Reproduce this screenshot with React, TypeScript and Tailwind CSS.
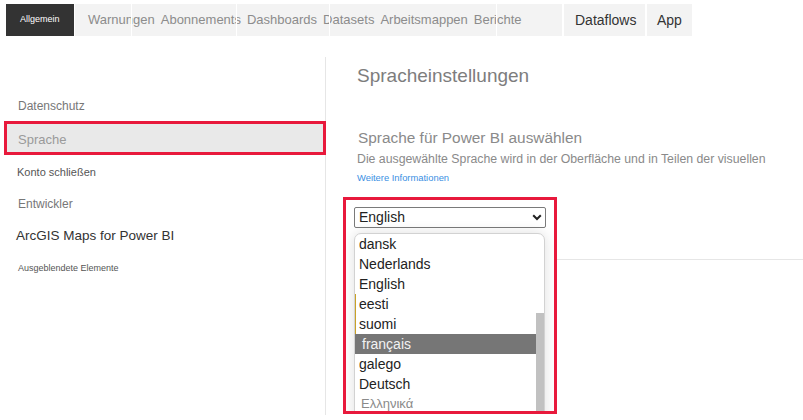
import React from "react";

const F = { fontFamily: '"Liberation Sans", Arial, sans-serif' };

function Chevron() {
  return (
    <svg width="10" height="7" viewBox="0 0 10 7" className="block">
      <path d="M1.2 1.2 L5 5 L8.8 1.2" fill="none" stroke="#222" strokeWidth="2" />
    </svg>
  );
}

const langs = [
  { t: "dansk" },
  { t: "Nederlands" },
  { t: "English" },
  { t: "eesti", mark: true },
  { t: "suomi", mark: true },
  { t: "français", sel: true },
  { t: "galego" },
  { t: "Deutsch" },
  { t: "Ελληνικά", greek: true },
];

export default function App() {
  return (
    <div className="w-[803px] h-[420px] bg-white overflow-hidden" style={F}>
      {/* top tabs */}
      <div className="flex h-[32px] mt-[4px] ml-[6px]">
        <div className="w-[68px] bg-[#333333] text-white text-[9px] flex items-center pl-[14px]">
          Allgemein
        </div>
        <div className="ml-[1px] relative w-[487px] bg-[#f3f3f3] flex items-center pl-[13px] gap-[6px] text-[13px] text-[#8c8c8c] whitespace-nowrap">
          <span>Warnungen</span>
          <span>Abonnements</span>
          <span>Dashboards</span>
          <span>Datasets</span>
          <span>Arbeitsmappen</span>
          <span>Berichte</span>
          <div className="absolute top-0 bottom-0 left-[56px] w-px bg-white" />
          <div className="absolute top-0 bottom-0 left-[161px] w-px bg-white" />
          <div className="absolute top-0 bottom-0 left-[254px] w-px bg-white" />
          <div className="absolute top-0 bottom-0 left-[421px] w-px bg-white" />
        </div>
        <div className="ml-[2px] w-[81px] bg-[#f3f3f3] flex items-center pl-[11px] text-[14px] text-[#333]">
          Dataflows
        </div>
        <div className="ml-[2px] w-[45px] bg-[#f3f3f3] flex items-center pl-[10px] text-[14px] text-[#333]">
          App
        </div>
      </div>

      {/* body */}
      <div className="flex mt-[21px]">
        {/* sidebar */}
        <div className="w-[326px] h-[358px] border-r border-[#e6e6e6] pt-[37px] flex flex-col shrink-0">
          <div className="h-[24px] flex items-center pl-[18px] text-[12px] text-[#777]">Datenschutz</div>
          <div className="mt-[3px] ml-[4px] w-[322px] h-[34px] shrink-0 border-[3px] border-[#e8193c] bg-[#e9e9e9] flex items-center pl-[11px] pt-[3px] text-[13px] text-[#9a9a9a]">
            Sprache
          </div>
          <div className="mt-[5px] h-[24px] flex items-center pl-[17px] text-[11px] text-[#555]">Konto schließen</div>
          <div className="mt-[8px] h-[24px] flex items-center pl-[18px] text-[12px] text-[#777]">Entwickler</div>
          <div className="mt-[8px] h-[24px] flex items-center pl-[16px] text-[13.5px] text-[#333]">ArcGIS Maps for Power BI</div>
          <div className="mt-[9px] h-[24px] flex items-center pl-[18px] text-[9px] text-[#555]">Ausgeblendete Elemente</div>
        </div>

        {/* content */}
        <div className="flex-1 pl-[17px] flex flex-col">
          <div className="pl-[14px] mt-[7px] h-[24px] leading-[24px] text-[19px] text-[#7d7d7d] whitespace-nowrap">
            Spracheinstellungen
          </div>
          <div className="pl-[15px] mt-[40px] h-[20px] leading-[20px] text-[15.4px] text-[#8a8a8a] whitespace-nowrap">
            Sprache für Power BI auswählen
          </div>
          <div className="pl-[14px] mt-[3px] h-[16px] leading-[16px] text-[12.3px] text-[#8a8a8a] whitespace-nowrap">
            Die ausgewählte Sprache wird in der Oberfläche und in Teilen der visuellen
          </div>
          <div className="pl-[14px] mt-[5px] h-[12px] leading-[12px] text-[9.4px] text-[#3a8fe3] whitespace-nowrap">
            Weitere Informationen
          </div>

          <div className="mt-[13px] flex">
            <div className="w-[214px] h-[217px] shrink-0 border-[3px] border-[#e8193c] overflow-hidden">
              <div className="ml-[8px] mt-[7px] w-[192px] h-[21px] border border-[#7a7a7a] rounded-[2px] flex items-center justify-between pl-[4px] pr-[3px] text-[14px] text-[#222]">
                <span>English</span>
                <Chevron />
              </div>
              <div className="ml-[8px] mt-[5px] w-[191px] h-[190px] border border-[#d2d2d2] rounded-t-[7px] bg-white flex shadow-[0_0_14px_rgba(0,0,0,0.13)] overflow-hidden">
                <div className="flex-1 flex flex-col">
                  {langs.map((l) => (
                    <div
                      key={l.t}
                      className={
                        "h-[20px] shrink-0 leading-[20px] whitespace-nowrap " +
                        (l.sel
                          ? "bg-[#767676] text-[#f2f2f2] pl-[7px] text-[14px]"
                          : l.greek
                          ? "text-[#8a8a8a] pl-[6px] text-[13px]"
                          : "text-[#222] pl-[4px] text-[14px]") +
                        (l.mark ? " shadow-[inset_1px_0_0_#c9a227]" : "")
                      }
                    >
                      {l.t}
                    </div>
                  ))}
                </div>
                <div className="w-[8px] shrink-0 flex flex-col">
                  <div className="mt-[79px] flex-1 bg-[#c1c1c1]" />
                </div>
              </div>
            </div>
            <div className="flex-1 mt-[62px] h-0 border-t border-[#e6e6e6]" />
          </div>
        </div>
      </div>
    </div>
  );
}
